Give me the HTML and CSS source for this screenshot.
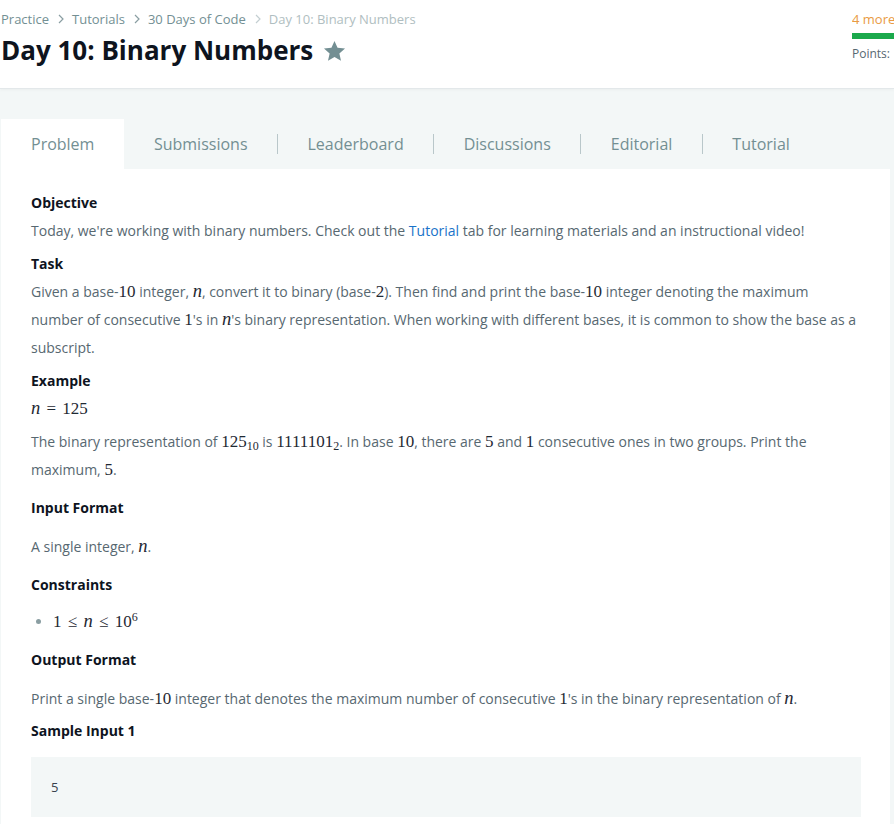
FILE: index.html
```html
<!DOCTYPE html>
<html>
<head>
<meta charset="utf-8">
<link rel="stylesheet" href="styles.css">
</head>
<body>
<header class="header">
  <div class="head-left">
    <nav class="crumbs">
      <span class="crumb">Practice</span>
      <svg class="chev" width="6" height="10" viewBox="0 0 6 10"><path d="M1 1l4 4-4 4" fill="none" stroke="#8a9ea2" stroke-width="1.2"/></svg>
      <span class="crumb">Tutorials</span>
      <svg class="chev" width="6" height="10" viewBox="0 0 6 10"><path d="M1 1l4 4-4 4" fill="none" stroke="#8a9ea2" stroke-width="1.2"/></svg>
      <span class="crumb">30 Days of Code</span>
      <svg class="chev" width="6" height="10" viewBox="0 0 6 10"><path d="M1 1l4 4-4 4" fill="none" stroke="#c3ced1" stroke-width="1.2"/></svg>
      <span class="crumb current">Day 10: Binary Numbers</span>
    </nav>
    <div class="title-row">
      <h1 class="title">Day 10: Binary Numbers</h1>
      <svg class="star" width="23" height="22" viewBox="0 0 24 23"><path d="M12 1l3.2 7.1 7.8.8-5.9 5.2 1.7 7.7L12 17.8 5.2 21.8l1.7-7.7L1 8.9l7.8-.8z" fill="#738f93"/></svg>
    </div>
  </div>
  <div class="head-right">
    <div class="more">4 more</div>
    <div class="bar"></div>
    <div class="points">Points:</div>
  </div>
</header>

<main class="main">
  <div class="tabs">
    <div class="tab active">Problem</div>
    <div class="tab">Submissions</div>
    <div class="sep"></div>
    <div class="tab">Leaderboard</div>
    <div class="sep"></div>
    <div class="tab">Discussions</div>
    <div class="sep"></div>
    <div class="tab">Editorial</div>
    <div class="sep"></div>
    <div class="tab">Tutorial</div>
  </div>

  <section class="panel">
    <h3 class="h">Objective</h3>
    <p class="p p-a">Today, we're working with binary numbers. Check out the <span class="link">Tutorial</span> tab for learning materials and an instructional video!</p>
    <h3 class="h h-a">Task</h3>
    <p class="p p-a">Given a base-<span class="m">10</span> integer, <span class="m i">n</span>, convert it to binary (base-<span class="m">2</span>). Then find and print the base-<span class="m">10</span> integer denoting the maximum number of consecutive <span class="m">1</span>'s in <span class="m i">n</span>'s binary representation. When working with different bases, it is common to show the base as a subscript.</p>
    <h3 class="h h-a">Example</h3>
    <p class="p p-a"><span class="m i">n</span><span class="m rel">=</span><span class="m">125</span></p>
    <p class="p p-b">The binary representation of <span class="m">125<sub class="sub">10</sub></span> is <span class="m">1111101<sub class="sub">2</sub></span>. In base <span class="m">10</span>, there are <span class="m">5</span> and <span class="m">1</span> consecutive ones in two groups. Print the maximum, <span class="m">5</span>.</p>

    <h3 class="h h-b">Input Format</h3>
    <p class="p p-c">A single integer, <span class="m i">n</span>.</p>

    <h3 class="h h-b">Constraints</h3>
    <ul class="list">
      <li class="li"><span class="m">1</span><span class="m rel">≤</span><span class="m i">n</span><span class="m rel">≤</span><span class="m">10<sup class="sup">6</sup></span></li>
    </ul>

    <h3 class="h h-b">Output Format</h3>
    <p class="p p-c">Print a single base-<span class="m">10</span> integer that denotes the maximum number of consecutive <span class="m">1</span>'s in the binary representation of <span class="m i">n</span>.</p>

    <h3 class="h h-c">Sample Input 1</h3>
    <pre class="code">5</pre>
  </section>
</main>
</body>
</html>
```

FILE: styles.css
```css
html, body {
  margin: 0;
  padding: 0;
}
body {
  font-family: "Open Sans", "Noto Sans", sans-serif;
  background: #f3f7f7;
  overflow: hidden;
}
.header {
  background: #fff;
  height: 88px;
  border-bottom: 1px solid #e3e8ea;
  box-shadow: 0 1px 3px rgba(0,0,0,0.04);
  display: flex;
  justify-content: space-between;
  padding-left: 1px;
}
.crumbs {
  display: flex;
  align-items: center;
  height: 20px;
  margin-top: 9px;
  font-size: 13px;
  color: #738f93;
}
.crumb { color: #738f93; }
.crumb.current { color: #b0bec1; }
.chev { margin: 0 8px 0 9px; }
.title-row {
  display: flex;
  align-items: center;
  margin-top: 5px;
}
.title {
  margin: 0;
  font-size: 26px;
  font-weight: 700;
  line-height: 32px;
  color: #0e141e;
}
.star { margin-left: 10px; margin-top: 1px; }
.head-right {
  width: 42px;
  overflow: hidden;
  white-space: nowrap;
}
.more {
  margin-top: 10px;
  font-size: 13px;
  line-height: 18px;
  color: #e99a43;
}
.bar {
  margin-top: 5px;
  height: 6px;
  background: #1ba94c;
  width: 100%;
}
.points {
  margin-top: 7px;
  font-size: 12px;
  line-height: 16px;
  color: #576871;
}

.main {
  padding: 30px 4px 0 1px;
}
.tabs {
  display: flex;
  align-items: center;
  height: 50px;
}
.tab {
  padding: 0 29.5px;
  height: 50px;
  line-height: 50px;
  font-size: 16px;
  color: #738f93;
}
.tab.active {
  background: #fff;
  padding: 0 30px;
}
.sep {
  width: 1px;
  height: 20px;
  background: #b9c7ca;
}
.panel {
  background: #fff;
  padding: 24px 29px 20px 30px;
  height: 700px;
}
.h {
  margin: 0;
  font-size: 14px;
  font-weight: 700;
  line-height: 20px;
  color: #0e141e;
}
.h-a { margin-top: 9px; }
.h-b { margin-top: 14px; }
.h-c { margin-top: 8px; }
.p {
  margin: 0;
  font-size: 14px;
  line-height: 28px;
  color: #576871;
}
.p-a { margin-top: 4px; }
.p-b { margin-top: 5px; }
.p-c { margin-top: 15px; }
.link { color: #1a73c9; }
.m {
  font-family: "Liberation Serif", "DejaVu Serif", serif;
  font-size: 17px;
  line-height: 0;
  color: #1f2933;
}
.i {
  font-style: italic;
  font-size: 18.5px;
}
.rel {
  display: inline-block;
  width: 13px;
  margin: 0 4.5px;
  text-align: center;
  line-height: 17px;
}
.sub {
  font-size: 12px;
  vertical-align: -3px;
  line-height: 0;
}
.sup {
  font-size: 12px;
  vertical-align: 6px;
  line-height: 0;
}
.list {
  margin: 13px 0 0 0;
  padding-left: 22px;
  font-size: 14px;
  line-height: 28px;
  color: #576871;
}
.li::marker { color: #8a9ea2; }
.code {
  margin: 16px 0 0 0;
  background: #f3f7f7;
  height: 60px;
  line-height: 60px;
  padding: 0 20px;
  font-family: "Open Sans", sans-serif;
  font-size: 13px;
  color: #39424e;
}
```
